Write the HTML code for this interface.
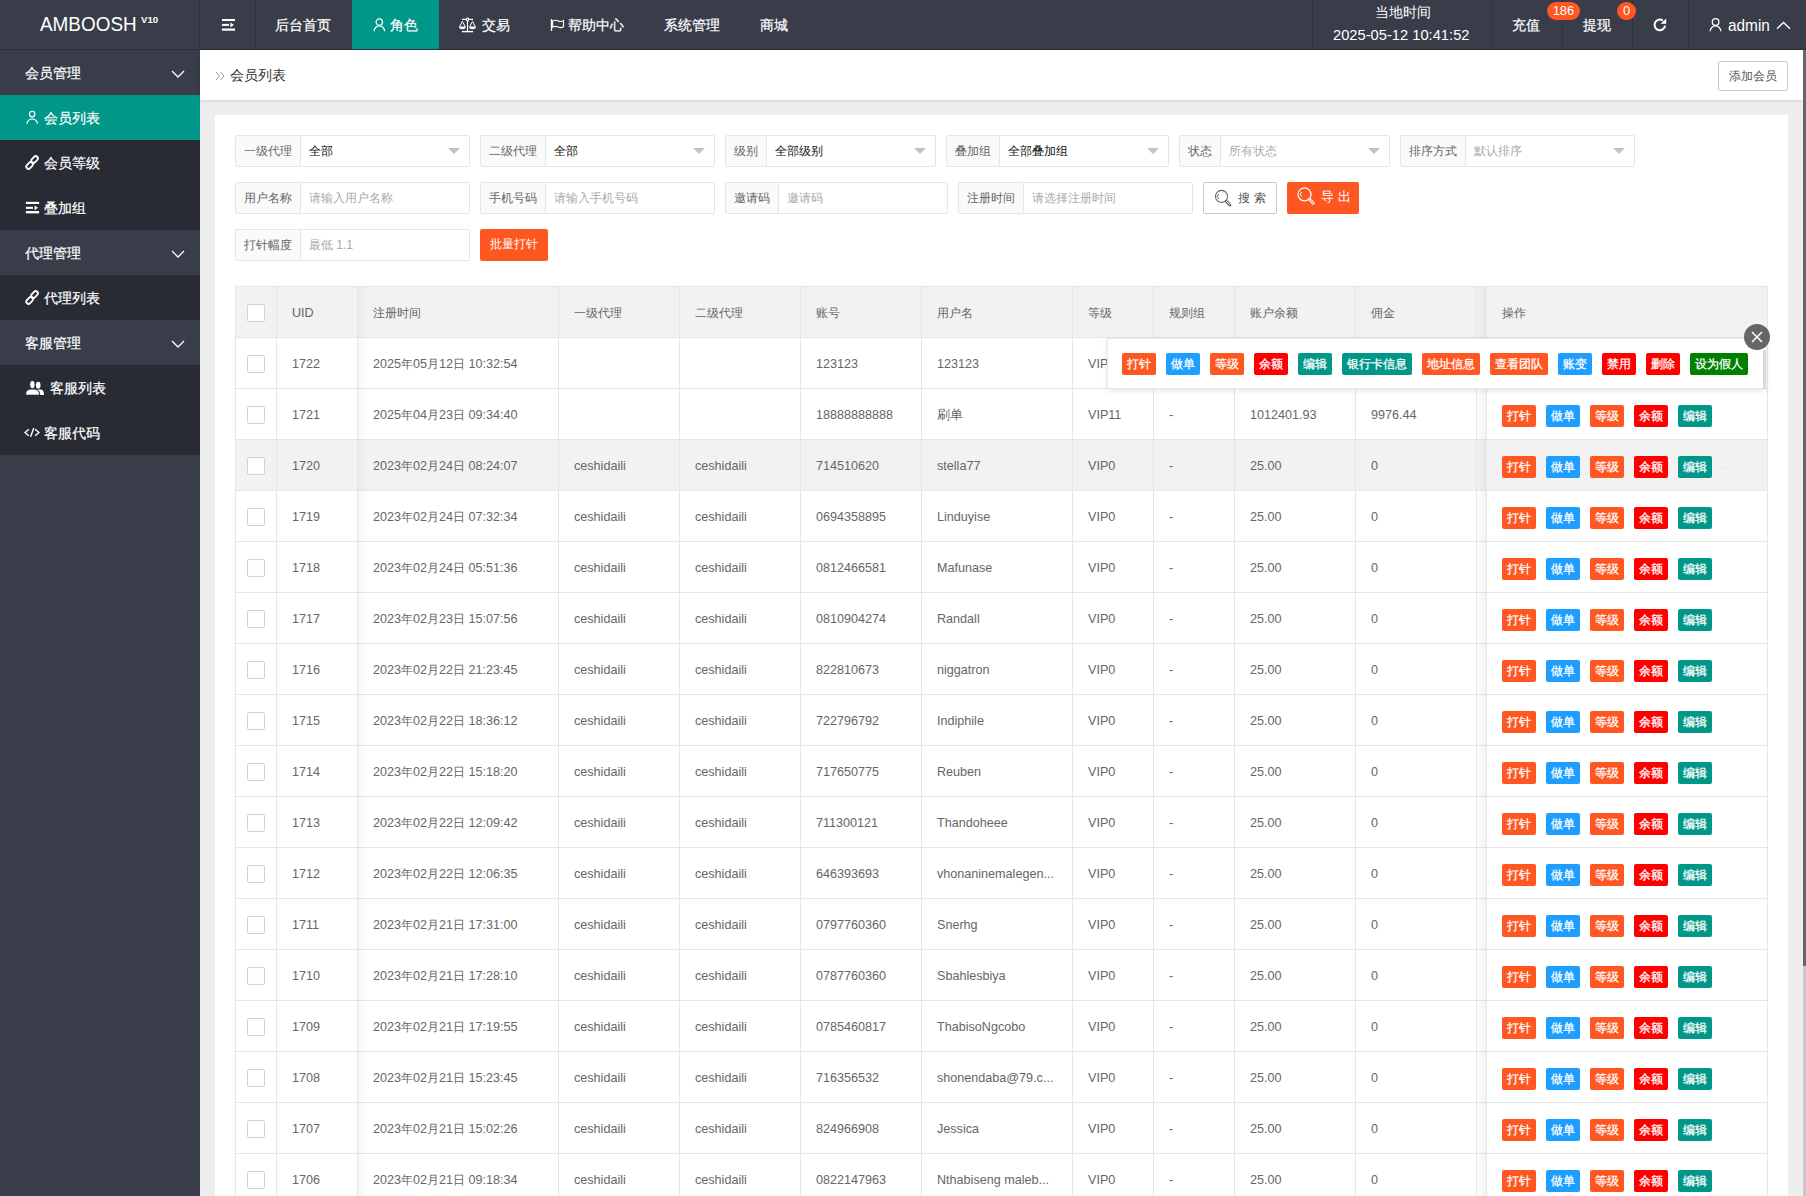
<!DOCTYPE html><html><head><meta charset="utf-8"><title>会员列表</title><style>
*{box-sizing:border-box;margin:0;padding:0}
html,body{width:1806px;height:1196px;overflow:hidden}
body{font-family:"Liberation Sans",sans-serif;background:#eeeeee;position:relative;color:#666}
.abs{position:absolute}
#hdr{left:0;top:0;width:1806px;height:50px;background:#393D49;border-bottom:1px solid #2d3039}
.vl{position:absolute;top:0;height:49px;width:1px;background:#30333d}
.nav{position:absolute;top:0;height:49px;line-height:50px;font-size:14px;color:rgba(255,255,255,.9);white-space:nowrap}
.nav svg{vertical-align:middle}
#side{left:0;top:50px;width:200px;height:1146px;background:#393D49}
.grp{position:absolute;left:0;width:200px;height:45px;line-height:45px;font-size:14px;color:#fff;padding-left:25px}
.chd{position:absolute;left:0;width:200px;background:#282B33;border-radius:0 0 3px 3px}
.itm{position:absolute;left:0;width:200px;height:45px;line-height:45px;font-size:14px;color:rgba(255,255,255,.9);white-space:nowrap}
.lbl{position:absolute;height:32px;line-height:30px;font-size:12px;color:#666;background:#FAFAFA;border:1px solid #e6e6e6;border-radius:2px 0 0 2px;padding-left:8px;white-space:nowrap}
.inp{position:absolute;height:32px;line-height:31px;font-size:12px;color:#111;background:#fff;border:1px solid #e6e6e6;border-left:none;border-radius:0 2px 2px 0;padding-left:8px;white-space:nowrap}
.ph{color:#aaa}
.caret{position:absolute;right:9px;top:12px;width:0;height:0;border-left:6px solid transparent;border-right:6px solid transparent;border-top:6px solid #c2c2c2}
.hl{position:absolute;height:1px;background:#e6e6e6}
.vl2{position:absolute;width:1px;background:#e6e6e6}
.c{position:absolute;font-size:12.6px;color:#666;white-space:nowrap;line-height:20px}
.th{position:absolute;font-size:12px;color:#666;white-space:nowrap;line-height:20px}
.cb{position:absolute;width:18px;height:18px;border:1px solid #d2d2d2;border-radius:2px;background:#fff}
.b{position:absolute;height:22px;line-height:22px;font-size:12px;color:#fff;text-align:center;border-radius:2px;white-space:nowrap;-webkit-text-stroke:0.25px #fff}
</style></head><body>
<div id="hdr" class="abs"></div>
<div class="vl" style="left:199px"></div><div class="vl" style="left:255px"></div>
<div class="abs" style="left:40px;top:12px;font-size:19.4px;color:#fff;line-height:24px;white-space:nowrap;transform:scaleX(.975);transform-origin:0 0">AMBOOSH</div>
<div class="abs" style="left:141px;top:13px;font-size:9.6px;font-weight:bold;color:#fff;line-height:14px;white-space:nowrap">V10</div>
<svg class="abs" style="left:221px;top:18px" width="15" height="14" viewBox="0 0 15 14"><rect x="0.9" y="1" width="13.1" height="2" fill="#fff"/><rect x="0.9" y="5.9" width="7.1" height="2" fill="#fff"/><path d="M9.4 4.4 L13 6.9 L9.4 9.3 Z" fill="#fff"/><rect x="0.9" y="10.5" width="13.1" height="2.2" fill="#fff"/></svg>
<div class="abs" style="left:352px;top:0;width:87px;height:49px;background:#009688"></div>
<div class="abs" style="left:275px;top:15px;font-size:14px;line-height:20px;color:#fff;white-space:nowrap;-webkit-text-stroke:0.2px #fff;">后台首页</div>
<div class="abs" style="left:390px;top:15px;font-size:14px;line-height:20px;color:#fff;white-space:nowrap;-webkit-text-stroke:0.2px #fff;">角色</div>
<div class="abs" style="left:482px;top:15px;font-size:14px;line-height:20px;color:#fff;white-space:nowrap;-webkit-text-stroke:0.2px #fff;">交易</div>
<div class="abs" style="left:568px;top:15px;font-size:14px;line-height:20px;color:#fff;white-space:nowrap;-webkit-text-stroke:0.2px #fff;">帮助中心</div>
<div class="abs" style="left:664px;top:15px;font-size:14px;line-height:20px;color:#fff;white-space:nowrap;-webkit-text-stroke:0.2px #fff;">系统管理</div>
<div class="abs" style="left:760px;top:15px;font-size:14px;line-height:20px;color:#fff;white-space:nowrap;-webkit-text-stroke:0.2px #fff;">商城</div>
<svg class="abs" style="left:373px;top:17px" width="13" height="15" viewBox="0 0 13 15"><circle cx="6.3" cy="5.1" r="3.2" fill="none" stroke="#fff" stroke-width="1.3"/><path d="M1.1 14.2 A5.25 5.25 0 0 1 11.6 14.2" fill="none" stroke="#fff" stroke-width="1.3"/></svg>
<svg class="abs" style="left:456px;top:14px" width="24" height="22" viewBox="0 0 24 22"><path d="M5.9 5.4 H10.2 M12.8 5.4 H17.1" stroke="#fff" stroke-width="1.2"/><circle cx="11.5" cy="5.4" r="1.25" fill="none" stroke="#fff" stroke-width="1.1"/><path d="M11.5 6.6 V17.5" stroke="#fff" stroke-width="1.2"/><path d="M5.9 17.6 H17.1" stroke="#fff" stroke-width="1.4"/><path d="M6.4 7.4 L3.6 12.7 M6.4 7.4 L9.2 12.7 M16.5 7.4 L13.7 12.7 M16.5 7.4 L19.3 12.7" stroke="#fff" stroke-width="1"/><path d="M3 12.5 H9.8 A3.4 2.8 0 0 1 3 12.5 Z M13.1 12.5 H19.9 A3.4 2.8 0 0 1 13.1 12.5 Z" fill="#fff"/></svg>
<svg class="abs" style="left:550px;top:18px" width="15" height="14" viewBox="0 0 15 14"><path d="M1.5 1 V13" stroke="#fff" stroke-width="1.4"/><path d="M2.6 3 C4.5 1.9 6.5 2.2 8.4 3 C10.4 3.8 12 3.6 13.5 2.6 V8.8 C12 9.8 10.4 10 8.4 9.1 C6.5 8.3 4.5 8.1 2.6 9.1 Z" stroke="#fff" stroke-width="1.1" fill="none"/></svg>
<div class="vl" style="left:1312px"></div>
<div class="vl" style="left:1492px"></div>
<div class="vl" style="left:1562px"></div>
<div class="vl" style="left:1632px"></div>
<div class="vl" style="left:1688px"></div>
<div class="abs" style="left:1313px;top:2px;width:179px;text-align:center;color:#fff;font-size:14px;line-height:20px">当地时间</div>
<div class="abs" style="left:1333px;top:25px;color:#fff;font-size:15.4px;line-height:20px;white-space:nowrap;transform:scaleX(.955);transform-origin:0 0">2025-05-12 10:41:52</div>
<div class="abs" style="left:1512px;top:15px;font-size:14px;line-height:20px;color:#fff;white-space:nowrap;-webkit-text-stroke:0.2px #fff;">充值</div>
<div class="abs" style="left:1547px;top:2px;width:33px;height:18px;border-radius:9px;background:#FF5722;color:#fff;font-size:13px;line-height:18px;text-align:center">186</div>
<div class="abs" style="left:1583px;top:15px;font-size:14px;line-height:20px;color:#fff;white-space:nowrap;-webkit-text-stroke:0.2px #fff;">提现</div>
<div class="abs" style="left:1617px;top:2px;width:19px;height:18px;border-radius:9.5px;background:#FF5722;color:#fff;font-size:13px;line-height:18px;text-align:center">0</div>
<svg class="abs" style="left:1652px;top:17px" width="16" height="16" viewBox="0 0 16 16"><path d="M13.1 8.7 A5.3 5.3 0 1 1 10.8 3.5" fill="none" stroke="#fff" stroke-width="2"/><path d="M14.2 1.5 V6.8 H8.6 Z" fill="#fff"/></svg>
<svg class="abs" style="left:1709px;top:17px" width="13" height="15" viewBox="0 0 13 15"><circle cx="6.6" cy="5.0" r="3.3" fill="none" stroke="#fff" stroke-width="1.25"/><path d="M1.2 14.2 A5.3 5.3 0 0 1 11.8 14.2" fill="none" stroke="#fff" stroke-width="1.25"/></svg>
<div class="abs" style="left:1728px;top:15px;color:#fff;font-size:16.2px;line-height:20px;transform:scaleX(.95);transform-origin:0 0">admin</div>
<svg class="abs" style="left:1776px;top:20.5px" width="15" height="9" viewBox="0 0 15 9"><path d="M1 7.8 L7.5 1.5 L14 7.8" fill="none" stroke="#fff" stroke-width="1.4"/></svg>
<div id="side" class="abs"></div>
<div class="chd" style="top:95px;height:135px"></div>
<div class="abs" style="left:0;top:95px;width:200px;height:45px;background:#009688"></div>
<div class="chd" style="top:275px;height:45px"></div>
<div class="chd" style="top:365px;height:90px"></div>
<div class="abs" style="left:25px;top:63px;font-size:14px;line-height:20px;color:#fff;white-space:nowrap;-webkit-text-stroke:0.2px #fff;">会员管理</div>
<svg class="abs" style="left:171px;top:70px" width="14" height="8" viewBox="0 0 14 8"><path d="M1 1 L7 7 L13 1" fill="none" stroke="#fff" stroke-width="1.3"/></svg>
<div class="abs" style="left:25px;top:243px;font-size:14px;line-height:20px;color:#fff;white-space:nowrap;-webkit-text-stroke:0.2px #fff;">代理管理</div>
<svg class="abs" style="left:171px;top:250px" width="14" height="8" viewBox="0 0 14 8"><path d="M1 1 L7 7 L13 1" fill="none" stroke="#fff" stroke-width="1.3"/></svg>
<div class="abs" style="left:25px;top:333px;font-size:14px;line-height:20px;color:#fff;white-space:nowrap;-webkit-text-stroke:0.2px #fff;">客服管理</div>
<svg class="abs" style="left:171px;top:340px" width="14" height="8" viewBox="0 0 14 8"><path d="M1 1 L7 7 L13 1" fill="none" stroke="#fff" stroke-width="1.3"/></svg>
<div class="abs" style="left:44px;top:108px;font-size:14px;line-height:20px;color:#fff;white-space:nowrap;-webkit-text-stroke:0.2px #fff;">会员列表</div>
<div class="abs" style="left:44px;top:153px;font-size:14px;line-height:20px;color:#fff;white-space:nowrap;-webkit-text-stroke:0.2px #fff;">会员等级</div>
<div class="abs" style="left:44px;top:198px;font-size:14px;line-height:20px;color:#fff;white-space:nowrap;-webkit-text-stroke:0.2px #fff;">叠加组</div>
<div class="abs" style="left:44px;top:288px;font-size:14px;line-height:20px;color:#fff;white-space:nowrap;-webkit-text-stroke:0.2px #fff;">代理列表</div>
<div class="abs" style="left:50px;top:378px;font-size:14px;line-height:20px;color:#fff;white-space:nowrap;-webkit-text-stroke:0.2px #fff;">客服列表</div>
<div class="abs" style="left:44px;top:423px;font-size:14px;line-height:20px;color:#fff;white-space:nowrap;-webkit-text-stroke:0.2px #fff;">客服代码</div>
<svg class="abs" style="left:26px;top:110px" width="13" height="15" viewBox="0 0 13 15"><circle cx="6.2" cy="4.1" r="2.75" fill="none" stroke="#fff" stroke-width="1.2"/><path d="M1.0 13.8 A5.2 4.9 0 0 1 11.4 13.8" fill="none" stroke="#fff" stroke-width="1.25"/></svg>
<svg class="abs" style="left:24px;top:154px" width="17" height="17" viewBox="0 0 17 17"><rect x="-3.8" y="-2.2" width="7.6" height="4.4" rx="2.2" fill="none" stroke="#fff" stroke-width="1.8" transform="translate(10.6 5.5) rotate(-47)"/><rect x="-3.8" y="-2.2" width="7.6" height="4.4" rx="2.2" fill="none" stroke="#fff" stroke-width="1.8" transform="translate(5.6 11.5) rotate(-47)"/></svg>
<svg class="abs" style="left:25px;top:201px" width="15" height="14" viewBox="0 0 15 14"><rect x="0.9" y="0.8" width="13.2" height="2.2" fill="#fff"/><rect x="0.9" y="5.8" width="7.1" height="2.1" fill="#fff"/><path d="M9.5 4.4 L13.1 6.8 L9.5 9.2 Z" fill="#fff"/><rect x="0.9" y="10" width="13.2" height="2.4" fill="#fff"/></svg>
<svg class="abs" style="left:24px;top:289px" width="17" height="17" viewBox="0 0 17 17"><rect x="-3.8" y="-2.2" width="7.6" height="4.4" rx="2.2" fill="none" stroke="#fff" stroke-width="1.8" transform="translate(10.6 5.5) rotate(-47)"/><rect x="-3.8" y="-2.2" width="7.6" height="4.4" rx="2.2" fill="none" stroke="#fff" stroke-width="1.8" transform="translate(5.6 11.5) rotate(-47)"/></svg>
<svg class="abs" style="left:25px;top:380px" width="20" height="16" viewBox="0 0 20 16"><path d="M12 9.6 L15.6 9.6 C17.6 9.8 19 11 19 15 H15.2 C15.2 12 14 10.3 12 9.6Z" fill="#fff"/><ellipse cx="13.2" cy="5.2" rx="2.3" ry="3.4" fill="#fff"/><path d="M0.8 15 C0.8 11 2.5 9.6 5.6 9.3 L9.6 9.3 C12.6 9.6 14.4 11 14.4 15 Z" fill="#fff" stroke="#282B33" stroke-width="0.6"/><ellipse cx="7.4" cy="4.6" rx="2.5" ry="3.9" fill="#fff" stroke="#282B33" stroke-width="0.5"/></svg>
<svg class="abs" style="left:24px;top:427px" width="16" height="11" viewBox="0 0 16 11"><path d="M4.9 2.2 L1 5.5 L4.9 8.8 M11.1 2.2 L15 5.5 L11.1 8.8 M9.8 1 L6.6 9.8" fill="none" stroke="#fff" stroke-width="1.4"/></svg>
<div class="abs" style="left:200px;top:50px;width:1603px;height:50px;background:#fff;box-shadow:0 1px 3px rgba(0,0,0,.12)"></div>
<svg class="abs" style="left:215px;top:71px" width="10" height="10" viewBox="0 0 10 10"><path d="M1 1 L4.5 5 L1 9 M5.5 1 L9 5 L5.5 9" fill="none" stroke="#999" stroke-width="1"/></svg>
<div class="abs" style="left:230px;top:65px;font-size:14px;color:#333;line-height:20px">会员列表</div>
<div class="abs" style="left:1718px;top:61px;width:70px;height:30px;border:1px solid #c9c9c9;border-radius:2px;background:#fff;font-size:12px;color:#555;text-align:center;line-height:28px">添加会员</div>
<div class="abs" style="left:1803px;top:50px;width:3px;height:1146px;background:#c8c8c8"></div>
<div class="abs" style="left:1803px;top:50px;width:3px;height:916px;background:#666"></div>
<div class="abs" style="left:215px;top:115px;width:1573px;height:1081px;background:#fff"></div>
<div class="lbl" style="left:235px;top:135px;width:66px">一级代理</div>
<div class="inp" style="left:301px;top:135px;width:169px"><span class="">全部</span><div class="caret"></div></div>
<div class="lbl" style="left:480px;top:135px;width:66px">二级代理</div>
<div class="inp" style="left:546px;top:135px;width:169px"><span class="">全部</span><div class="caret"></div></div>
<div class="lbl" style="left:725px;top:135px;width:42px">级别</div>
<div class="inp" style="left:767px;top:135px;width:169px"><span class="">全部级别</span><div class="caret"></div></div>
<div class="lbl" style="left:946px;top:135px;width:54px">叠加组</div>
<div class="inp" style="left:1000px;top:135px;width:169px"><span class="">全部叠加组</span><div class="caret"></div></div>
<div class="lbl" style="left:1179px;top:135px;width:42px">状态</div>
<div class="inp" style="left:1221px;top:135px;width:169px"><span class="ph">所有状态</span><div class="caret"></div></div>
<div class="lbl" style="left:1400px;top:135px;width:66px">排序方式</div>
<div class="inp" style="left:1466px;top:135px;width:169px"><span class="ph">默认排序</span><div class="caret"></div></div>
<div class="lbl" style="left:235px;top:182px;width:66px">用户名称</div>
<div class="inp" style="left:301px;top:182px;width:169px"><span class="ph">请输入用户名称</span></div>
<div class="lbl" style="left:480px;top:182px;width:66px">手机号码</div>
<div class="inp" style="left:546px;top:182px;width:169px"><span class="ph">请输入手机号码</span></div>
<div class="lbl" style="left:725px;top:182px;width:54px">邀请码</div>
<div class="inp" style="left:779px;top:182px;width:169px"><span class="ph">邀请码</span></div>
<div class="lbl" style="left:958px;top:182px;width:66px">注册时间</div>
<div class="inp" style="left:1024px;top:182px;width:169px"><span class="ph">请选择注册时间</span></div>
<div class="lbl" style="left:235px;top:229px;width:66px">打针幅度</div>
<div class="inp" style="left:301px;top:229px;width:169px"><span class="ph">最低 1.1</span></div>
<div class="abs" style="left:1203px;top:182px;width:74px;height:32px;border:1px solid #c9c9c9;border-radius:2px;background:#fff"></div>
<svg class="abs" style="left:1213px;top:188px" width="20" height="20" viewBox="0 0 20 20"><circle cx="8.5" cy="8.4" r="6" fill="none" stroke="#666" stroke-width="1.1"/><path d="M5.6 6 A3.3 3.3 0 0 0 5.6 10.8" fill="none" stroke="#666" stroke-width="1"/><path d="M13.30 13.20 L16.9 16.9" stroke="#666" stroke-width="2.9" stroke-linecap="round"/><path d="M13.50 13.40 L16.7 16.7" stroke="#fff" stroke-width="0.9" stroke-linecap="round"/></svg>
<div class="abs" style="left:1238px;top:188px;font-size:12px;line-height:20px;color:#555;letter-spacing:3.5px;white-space:nowrap">搜索</div>
<div class="abs" style="left:1287px;top:182px;width:72px;height:32px;border-radius:2px;background:#FF5722"></div>
<svg class="abs" style="left:1296px;top:186px" width="20" height="20" viewBox="0 0 20 20"><circle cx="8.5" cy="8.4" r="6.5" fill="none" stroke="#fff" stroke-width="1.2"/><path d="M5.6 6 A3.3 3.3 0 0 0 5.6 10.8" fill="none" stroke="#fff" stroke-width="1"/><path d="M13.70 13.60 L17.2 17.2" stroke="#fff" stroke-width="2.9" stroke-linecap="round"/><path d="M13.90 13.80 L17.0 17.0" stroke="#FF5722" stroke-width="0.9" stroke-linecap="round"/></svg>
<div class="abs" style="left:1321px;top:187px;font-size:13px;line-height:20px;color:#fff;letter-spacing:3.6px;white-space:nowrap">导出</div>
<div class="abs" style="left:480px;top:229px;width:68px;height:32px;border-radius:2px;background:#FF5722;font-size:12px;color:#fff;line-height:30px;text-align:center">批量打针</div>
<div class="abs" style="left:235px;top:286px;width:1533px;height:52px;background:#f2f2f2"></div>
<div class="abs" style="left:235px;top:439px;width:1533px;height:51px;background:#f2f2f2"></div>
<div class="hl" style="left:235px;top:286px;width:1533px"></div>
<div class="hl" style="left:235px;top:337px;width:1533px"></div>
<div class="hl" style="left:235px;top:388px;width:1533px"></div>
<div class="hl" style="left:235px;top:439px;width:1533px"></div>
<div class="hl" style="left:235px;top:490px;width:1533px"></div>
<div class="hl" style="left:235px;top:541px;width:1533px"></div>
<div class="hl" style="left:235px;top:592px;width:1533px"></div>
<div class="hl" style="left:235px;top:643px;width:1533px"></div>
<div class="hl" style="left:235px;top:694px;width:1533px"></div>
<div class="hl" style="left:235px;top:745px;width:1533px"></div>
<div class="hl" style="left:235px;top:796px;width:1533px"></div>
<div class="hl" style="left:235px;top:847px;width:1533px"></div>
<div class="hl" style="left:235px;top:898px;width:1533px"></div>
<div class="hl" style="left:235px;top:949px;width:1533px"></div>
<div class="hl" style="left:235px;top:1000px;width:1533px"></div>
<div class="hl" style="left:235px;top:1051px;width:1533px"></div>
<div class="hl" style="left:235px;top:1102px;width:1533px"></div>
<div class="hl" style="left:235px;top:1153px;width:1533px"></div>
<div class="vl2" style="left:235px;top:286px;height:910px"></div>
<div class="vl2" style="left:276px;top:286px;height:910px"></div>
<div class="vl2" style="left:357px;top:286px;height:910px"></div>
<div class="vl2" style="left:558px;top:286px;height:910px"></div>
<div class="vl2" style="left:679px;top:286px;height:910px"></div>
<div class="vl2" style="left:800px;top:286px;height:910px"></div>
<div class="vl2" style="left:921px;top:286px;height:910px"></div>
<div class="vl2" style="left:1072px;top:286px;height:910px"></div>
<div class="vl2" style="left:1153px;top:286px;height:910px"></div>
<div class="vl2" style="left:1234px;top:286px;height:910px"></div>
<div class="vl2" style="left:1355px;top:286px;height:910px"></div>
<div class="vl2" style="left:1476px;top:286px;height:910px"></div>
<div class="vl2" style="left:1486px;top:286px;height:910px"></div>
<div class="vl2" style="left:1767px;top:286px;height:910px"></div>
<div class="abs" style="left:358px;top:287px;width:9px;height:910px;background:linear-gradient(to right,rgba(0,0,0,.04),rgba(0,0,0,0))"></div>
<div class="abs" style="left:1477px;top:287px;width:9px;height:910px;background:linear-gradient(to left,rgba(0,0,0,.05),rgba(0,0,0,0))"></div>
<div class="cb" style="left:247px;top:304px"></div>
<div class="c" style="left:292px;top:303px">UID</div>
<div class="th" style="left:373px;top:303px">注册时间</div>
<div class="th" style="left:574px;top:303px">一级代理</div>
<div class="th" style="left:695px;top:303px">二级代理</div>
<div class="th" style="left:816px;top:303px">账号</div>
<div class="th" style="left:937px;top:303px">用户名</div>
<div class="th" style="left:1088px;top:303px">等级</div>
<div class="th" style="left:1169px;top:303px">规则组</div>
<div class="th" style="left:1250px;top:303px">账户余额</div>
<div class="th" style="left:1371px;top:303px">佣金</div>
<div class="th" style="left:1502px;top:303px">操作</div>
<div class="cb" style="left:247px;top:355px"></div>
<div class="c" style="left:292px;top:354px">1722</div>
<div class="c" style="left:373px;top:354px">2025<span style="font-size:12px">年</span>05<span style="font-size:12px">月</span>12<span style="font-size:12px">日</span> 10:32:54</div>
<div class="c" style="left:816px;top:354px">123123</div>
<div class="c" style="left:937px;top:354px">123123</div>
<div class="c" style="left:1088px;top:354px">VIP</div>
<div class="cb" style="left:247px;top:406px"></div>
<div class="c" style="left:292px;top:405px">1721</div>
<div class="c" style="left:373px;top:405px">2025<span style="font-size:12px">年</span>04<span style="font-size:12px">月</span>23<span style="font-size:12px">日</span> 09:34:40</div>
<div class="c" style="left:816px;top:405px">18888888888</div>
<div class="c" style="left:937px;top:405px">刷单</div>
<div class="c" style="left:1088px;top:405px">VIP11</div>
<div class="c" style="left:1169px;top:405px">-</div>
<div class="c" style="left:1250px;top:405px">1012401.93</div>
<div class="c" style="left:1371px;top:405px">9976.44</div>
<div class="b" style="left:1502px;top:405px;width:34px;background:#FF5722">打针</div>
<div class="b" style="left:1546px;top:405px;width:34px;background:#1E9FFF">做单</div>
<div class="b" style="left:1590px;top:405px;width:34px;background:#FF5722">等级</div>
<div class="b" style="left:1634px;top:405px;width:34px;background:#FF0000">余额</div>
<div class="b" style="left:1678px;top:405px;width:34px;background:#009688">编辑</div>
<div class="cb" style="left:247px;top:457px"></div>
<div class="c" style="left:292px;top:456px">1720</div>
<div class="c" style="left:373px;top:456px">2023<span style="font-size:12px">年</span>02<span style="font-size:12px">月</span>24<span style="font-size:12px">日</span> 08:24:07</div>
<div class="c" style="left:574px;top:456px">ceshidaili</div>
<div class="c" style="left:695px;top:456px">ceshidaili</div>
<div class="c" style="left:816px;top:456px">714510620</div>
<div class="c" style="left:937px;top:456px">stella77</div>
<div class="c" style="left:1088px;top:456px">VIP0</div>
<div class="c" style="left:1169px;top:456px">-</div>
<div class="c" style="left:1250px;top:456px">25.00</div>
<div class="c" style="left:1371px;top:456px">0</div>
<div class="b" style="left:1502px;top:456px;width:34px;background:#FF5722">打针</div>
<div class="b" style="left:1546px;top:456px;width:34px;background:#1E9FFF">做单</div>
<div class="b" style="left:1590px;top:456px;width:34px;background:#FF5722">等级</div>
<div class="b" style="left:1634px;top:456px;width:34px;background:#FF0000">余额</div>
<div class="b" style="left:1678px;top:456px;width:34px;background:#009688">编辑</div>
<div class="cb" style="left:247px;top:508px"></div>
<div class="c" style="left:292px;top:507px">1719</div>
<div class="c" style="left:373px;top:507px">2023<span style="font-size:12px">年</span>02<span style="font-size:12px">月</span>24<span style="font-size:12px">日</span> 07:32:34</div>
<div class="c" style="left:574px;top:507px">ceshidaili</div>
<div class="c" style="left:695px;top:507px">ceshidaili</div>
<div class="c" style="left:816px;top:507px">0694358895</div>
<div class="c" style="left:937px;top:507px">Linduyise</div>
<div class="c" style="left:1088px;top:507px">VIP0</div>
<div class="c" style="left:1169px;top:507px">-</div>
<div class="c" style="left:1250px;top:507px">25.00</div>
<div class="c" style="left:1371px;top:507px">0</div>
<div class="b" style="left:1502px;top:507px;width:34px;background:#FF5722">打针</div>
<div class="b" style="left:1546px;top:507px;width:34px;background:#1E9FFF">做单</div>
<div class="b" style="left:1590px;top:507px;width:34px;background:#FF5722">等级</div>
<div class="b" style="left:1634px;top:507px;width:34px;background:#FF0000">余额</div>
<div class="b" style="left:1678px;top:507px;width:34px;background:#009688">编辑</div>
<div class="cb" style="left:247px;top:559px"></div>
<div class="c" style="left:292px;top:558px">1718</div>
<div class="c" style="left:373px;top:558px">2023<span style="font-size:12px">年</span>02<span style="font-size:12px">月</span>24<span style="font-size:12px">日</span> 05:51:36</div>
<div class="c" style="left:574px;top:558px">ceshidaili</div>
<div class="c" style="left:695px;top:558px">ceshidaili</div>
<div class="c" style="left:816px;top:558px">0812466581</div>
<div class="c" style="left:937px;top:558px">Mafunase</div>
<div class="c" style="left:1088px;top:558px">VIP0</div>
<div class="c" style="left:1169px;top:558px">-</div>
<div class="c" style="left:1250px;top:558px">25.00</div>
<div class="c" style="left:1371px;top:558px">0</div>
<div class="b" style="left:1502px;top:558px;width:34px;background:#FF5722">打针</div>
<div class="b" style="left:1546px;top:558px;width:34px;background:#1E9FFF">做单</div>
<div class="b" style="left:1590px;top:558px;width:34px;background:#FF5722">等级</div>
<div class="b" style="left:1634px;top:558px;width:34px;background:#FF0000">余额</div>
<div class="b" style="left:1678px;top:558px;width:34px;background:#009688">编辑</div>
<div class="cb" style="left:247px;top:610px"></div>
<div class="c" style="left:292px;top:609px">1717</div>
<div class="c" style="left:373px;top:609px">2023<span style="font-size:12px">年</span>02<span style="font-size:12px">月</span>23<span style="font-size:12px">日</span> 15:07:56</div>
<div class="c" style="left:574px;top:609px">ceshidaili</div>
<div class="c" style="left:695px;top:609px">ceshidaili</div>
<div class="c" style="left:816px;top:609px">0810904274</div>
<div class="c" style="left:937px;top:609px">Randall</div>
<div class="c" style="left:1088px;top:609px">VIP0</div>
<div class="c" style="left:1169px;top:609px">-</div>
<div class="c" style="left:1250px;top:609px">25.00</div>
<div class="c" style="left:1371px;top:609px">0</div>
<div class="b" style="left:1502px;top:609px;width:34px;background:#FF5722">打针</div>
<div class="b" style="left:1546px;top:609px;width:34px;background:#1E9FFF">做单</div>
<div class="b" style="left:1590px;top:609px;width:34px;background:#FF5722">等级</div>
<div class="b" style="left:1634px;top:609px;width:34px;background:#FF0000">余额</div>
<div class="b" style="left:1678px;top:609px;width:34px;background:#009688">编辑</div>
<div class="cb" style="left:247px;top:661px"></div>
<div class="c" style="left:292px;top:660px">1716</div>
<div class="c" style="left:373px;top:660px">2023<span style="font-size:12px">年</span>02<span style="font-size:12px">月</span>22<span style="font-size:12px">日</span> 21:23:45</div>
<div class="c" style="left:574px;top:660px">ceshidaili</div>
<div class="c" style="left:695px;top:660px">ceshidaili</div>
<div class="c" style="left:816px;top:660px">822810673</div>
<div class="c" style="left:937px;top:660px">niggatron</div>
<div class="c" style="left:1088px;top:660px">VIP0</div>
<div class="c" style="left:1169px;top:660px">-</div>
<div class="c" style="left:1250px;top:660px">25.00</div>
<div class="c" style="left:1371px;top:660px">0</div>
<div class="b" style="left:1502px;top:660px;width:34px;background:#FF5722">打针</div>
<div class="b" style="left:1546px;top:660px;width:34px;background:#1E9FFF">做单</div>
<div class="b" style="left:1590px;top:660px;width:34px;background:#FF5722">等级</div>
<div class="b" style="left:1634px;top:660px;width:34px;background:#FF0000">余额</div>
<div class="b" style="left:1678px;top:660px;width:34px;background:#009688">编辑</div>
<div class="cb" style="left:247px;top:712px"></div>
<div class="c" style="left:292px;top:711px">1715</div>
<div class="c" style="left:373px;top:711px">2023<span style="font-size:12px">年</span>02<span style="font-size:12px">月</span>22<span style="font-size:12px">日</span> 18:36:12</div>
<div class="c" style="left:574px;top:711px">ceshidaili</div>
<div class="c" style="left:695px;top:711px">ceshidaili</div>
<div class="c" style="left:816px;top:711px">722796792</div>
<div class="c" style="left:937px;top:711px">Indiphile</div>
<div class="c" style="left:1088px;top:711px">VIP0</div>
<div class="c" style="left:1169px;top:711px">-</div>
<div class="c" style="left:1250px;top:711px">25.00</div>
<div class="c" style="left:1371px;top:711px">0</div>
<div class="b" style="left:1502px;top:711px;width:34px;background:#FF5722">打针</div>
<div class="b" style="left:1546px;top:711px;width:34px;background:#1E9FFF">做单</div>
<div class="b" style="left:1590px;top:711px;width:34px;background:#FF5722">等级</div>
<div class="b" style="left:1634px;top:711px;width:34px;background:#FF0000">余额</div>
<div class="b" style="left:1678px;top:711px;width:34px;background:#009688">编辑</div>
<div class="cb" style="left:247px;top:763px"></div>
<div class="c" style="left:292px;top:762px">1714</div>
<div class="c" style="left:373px;top:762px">2023<span style="font-size:12px">年</span>02<span style="font-size:12px">月</span>22<span style="font-size:12px">日</span> 15:18:20</div>
<div class="c" style="left:574px;top:762px">ceshidaili</div>
<div class="c" style="left:695px;top:762px">ceshidaili</div>
<div class="c" style="left:816px;top:762px">717650775</div>
<div class="c" style="left:937px;top:762px">Reuben</div>
<div class="c" style="left:1088px;top:762px">VIP0</div>
<div class="c" style="left:1169px;top:762px">-</div>
<div class="c" style="left:1250px;top:762px">25.00</div>
<div class="c" style="left:1371px;top:762px">0</div>
<div class="b" style="left:1502px;top:762px;width:34px;background:#FF5722">打针</div>
<div class="b" style="left:1546px;top:762px;width:34px;background:#1E9FFF">做单</div>
<div class="b" style="left:1590px;top:762px;width:34px;background:#FF5722">等级</div>
<div class="b" style="left:1634px;top:762px;width:34px;background:#FF0000">余额</div>
<div class="b" style="left:1678px;top:762px;width:34px;background:#009688">编辑</div>
<div class="cb" style="left:247px;top:814px"></div>
<div class="c" style="left:292px;top:813px">1713</div>
<div class="c" style="left:373px;top:813px">2023<span style="font-size:12px">年</span>02<span style="font-size:12px">月</span>22<span style="font-size:12px">日</span> 12:09:42</div>
<div class="c" style="left:574px;top:813px">ceshidaili</div>
<div class="c" style="left:695px;top:813px">ceshidaili</div>
<div class="c" style="left:816px;top:813px">711300121</div>
<div class="c" style="left:937px;top:813px">Thandoheee</div>
<div class="c" style="left:1088px;top:813px">VIP0</div>
<div class="c" style="left:1169px;top:813px">-</div>
<div class="c" style="left:1250px;top:813px">25.00</div>
<div class="c" style="left:1371px;top:813px">0</div>
<div class="b" style="left:1502px;top:813px;width:34px;background:#FF5722">打针</div>
<div class="b" style="left:1546px;top:813px;width:34px;background:#1E9FFF">做单</div>
<div class="b" style="left:1590px;top:813px;width:34px;background:#FF5722">等级</div>
<div class="b" style="left:1634px;top:813px;width:34px;background:#FF0000">余额</div>
<div class="b" style="left:1678px;top:813px;width:34px;background:#009688">编辑</div>
<div class="cb" style="left:247px;top:865px"></div>
<div class="c" style="left:292px;top:864px">1712</div>
<div class="c" style="left:373px;top:864px">2023<span style="font-size:12px">年</span>02<span style="font-size:12px">月</span>22<span style="font-size:12px">日</span> 12:06:35</div>
<div class="c" style="left:574px;top:864px">ceshidaili</div>
<div class="c" style="left:695px;top:864px">ceshidaili</div>
<div class="c" style="left:816px;top:864px">646393693</div>
<div class="c" style="left:937px;top:864px">vhonaninemalegen...</div>
<div class="c" style="left:1088px;top:864px">VIP0</div>
<div class="c" style="left:1169px;top:864px">-</div>
<div class="c" style="left:1250px;top:864px">25.00</div>
<div class="c" style="left:1371px;top:864px">0</div>
<div class="b" style="left:1502px;top:864px;width:34px;background:#FF5722">打针</div>
<div class="b" style="left:1546px;top:864px;width:34px;background:#1E9FFF">做单</div>
<div class="b" style="left:1590px;top:864px;width:34px;background:#FF5722">等级</div>
<div class="b" style="left:1634px;top:864px;width:34px;background:#FF0000">余额</div>
<div class="b" style="left:1678px;top:864px;width:34px;background:#009688">编辑</div>
<div class="cb" style="left:247px;top:916px"></div>
<div class="c" style="left:292px;top:915px">1711</div>
<div class="c" style="left:373px;top:915px">2023<span style="font-size:12px">年</span>02<span style="font-size:12px">月</span>21<span style="font-size:12px">日</span> 17:31:00</div>
<div class="c" style="left:574px;top:915px">ceshidaili</div>
<div class="c" style="left:695px;top:915px">ceshidaili</div>
<div class="c" style="left:816px;top:915px">0797760360</div>
<div class="c" style="left:937px;top:915px">Snerhg</div>
<div class="c" style="left:1088px;top:915px">VIP0</div>
<div class="c" style="left:1169px;top:915px">-</div>
<div class="c" style="left:1250px;top:915px">25.00</div>
<div class="c" style="left:1371px;top:915px">0</div>
<div class="b" style="left:1502px;top:915px;width:34px;background:#FF5722">打针</div>
<div class="b" style="left:1546px;top:915px;width:34px;background:#1E9FFF">做单</div>
<div class="b" style="left:1590px;top:915px;width:34px;background:#FF5722">等级</div>
<div class="b" style="left:1634px;top:915px;width:34px;background:#FF0000">余额</div>
<div class="b" style="left:1678px;top:915px;width:34px;background:#009688">编辑</div>
<div class="cb" style="left:247px;top:967px"></div>
<div class="c" style="left:292px;top:966px">1710</div>
<div class="c" style="left:373px;top:966px">2023<span style="font-size:12px">年</span>02<span style="font-size:12px">月</span>21<span style="font-size:12px">日</span> 17:28:10</div>
<div class="c" style="left:574px;top:966px">ceshidaili</div>
<div class="c" style="left:695px;top:966px">ceshidaili</div>
<div class="c" style="left:816px;top:966px">0787760360</div>
<div class="c" style="left:937px;top:966px">Sbahlesbiya</div>
<div class="c" style="left:1088px;top:966px">VIP0</div>
<div class="c" style="left:1169px;top:966px">-</div>
<div class="c" style="left:1250px;top:966px">25.00</div>
<div class="c" style="left:1371px;top:966px">0</div>
<div class="b" style="left:1502px;top:966px;width:34px;background:#FF5722">打针</div>
<div class="b" style="left:1546px;top:966px;width:34px;background:#1E9FFF">做单</div>
<div class="b" style="left:1590px;top:966px;width:34px;background:#FF5722">等级</div>
<div class="b" style="left:1634px;top:966px;width:34px;background:#FF0000">余额</div>
<div class="b" style="left:1678px;top:966px;width:34px;background:#009688">编辑</div>
<div class="cb" style="left:247px;top:1018px"></div>
<div class="c" style="left:292px;top:1017px">1709</div>
<div class="c" style="left:373px;top:1017px">2023<span style="font-size:12px">年</span>02<span style="font-size:12px">月</span>21<span style="font-size:12px">日</span> 17:19:55</div>
<div class="c" style="left:574px;top:1017px">ceshidaili</div>
<div class="c" style="left:695px;top:1017px">ceshidaili</div>
<div class="c" style="left:816px;top:1017px">0785460817</div>
<div class="c" style="left:937px;top:1017px">ThabisoNgcobo</div>
<div class="c" style="left:1088px;top:1017px">VIP0</div>
<div class="c" style="left:1169px;top:1017px">-</div>
<div class="c" style="left:1250px;top:1017px">25.00</div>
<div class="c" style="left:1371px;top:1017px">0</div>
<div class="b" style="left:1502px;top:1017px;width:34px;background:#FF5722">打针</div>
<div class="b" style="left:1546px;top:1017px;width:34px;background:#1E9FFF">做单</div>
<div class="b" style="left:1590px;top:1017px;width:34px;background:#FF5722">等级</div>
<div class="b" style="left:1634px;top:1017px;width:34px;background:#FF0000">余额</div>
<div class="b" style="left:1678px;top:1017px;width:34px;background:#009688">编辑</div>
<div class="cb" style="left:247px;top:1069px"></div>
<div class="c" style="left:292px;top:1068px">1708</div>
<div class="c" style="left:373px;top:1068px">2023<span style="font-size:12px">年</span>02<span style="font-size:12px">月</span>21<span style="font-size:12px">日</span> 15:23:45</div>
<div class="c" style="left:574px;top:1068px">ceshidaili</div>
<div class="c" style="left:695px;top:1068px">ceshidaili</div>
<div class="c" style="left:816px;top:1068px">716356532</div>
<div class="c" style="left:937px;top:1068px">shonendaba@79.c...</div>
<div class="c" style="left:1088px;top:1068px">VIP0</div>
<div class="c" style="left:1169px;top:1068px">-</div>
<div class="c" style="left:1250px;top:1068px">25.00</div>
<div class="c" style="left:1371px;top:1068px">0</div>
<div class="b" style="left:1502px;top:1068px;width:34px;background:#FF5722">打针</div>
<div class="b" style="left:1546px;top:1068px;width:34px;background:#1E9FFF">做单</div>
<div class="b" style="left:1590px;top:1068px;width:34px;background:#FF5722">等级</div>
<div class="b" style="left:1634px;top:1068px;width:34px;background:#FF0000">余额</div>
<div class="b" style="left:1678px;top:1068px;width:34px;background:#009688">编辑</div>
<div class="cb" style="left:247px;top:1120px"></div>
<div class="c" style="left:292px;top:1119px">1707</div>
<div class="c" style="left:373px;top:1119px">2023<span style="font-size:12px">年</span>02<span style="font-size:12px">月</span>21<span style="font-size:12px">日</span> 15:02:26</div>
<div class="c" style="left:574px;top:1119px">ceshidaili</div>
<div class="c" style="left:695px;top:1119px">ceshidaili</div>
<div class="c" style="left:816px;top:1119px">824966908</div>
<div class="c" style="left:937px;top:1119px">Jessica</div>
<div class="c" style="left:1088px;top:1119px">VIP0</div>
<div class="c" style="left:1169px;top:1119px">-</div>
<div class="c" style="left:1250px;top:1119px">25.00</div>
<div class="c" style="left:1371px;top:1119px">0</div>
<div class="b" style="left:1502px;top:1119px;width:34px;background:#FF5722">打针</div>
<div class="b" style="left:1546px;top:1119px;width:34px;background:#1E9FFF">做单</div>
<div class="b" style="left:1590px;top:1119px;width:34px;background:#FF5722">等级</div>
<div class="b" style="left:1634px;top:1119px;width:34px;background:#FF0000">余额</div>
<div class="b" style="left:1678px;top:1119px;width:34px;background:#009688">编辑</div>
<div class="cb" style="left:247px;top:1171px"></div>
<div class="c" style="left:292px;top:1170px">1706</div>
<div class="c" style="left:373px;top:1170px">2023<span style="font-size:12px">年</span>02<span style="font-size:12px">月</span>21<span style="font-size:12px">日</span> 09:18:34</div>
<div class="c" style="left:574px;top:1170px">ceshidaili</div>
<div class="c" style="left:695px;top:1170px">ceshidaili</div>
<div class="c" style="left:816px;top:1170px">0822147963</div>
<div class="c" style="left:937px;top:1170px">Nthabiseng maleb...</div>
<div class="c" style="left:1088px;top:1170px">VIP0</div>
<div class="c" style="left:1169px;top:1170px">-</div>
<div class="c" style="left:1250px;top:1170px">25.00</div>
<div class="c" style="left:1371px;top:1170px">0</div>
<div class="b" style="left:1502px;top:1170px;width:34px;background:#FF5722">打针</div>
<div class="b" style="left:1546px;top:1170px;width:34px;background:#1E9FFF">做单</div>
<div class="b" style="left:1590px;top:1170px;width:34px;background:#FF5722">等级</div>
<div class="b" style="left:1634px;top:1170px;width:34px;background:#FF0000">余额</div>
<div class="b" style="left:1678px;top:1170px;width:34px;background:#009688">编辑</div>
<div class="abs" style="left:1723px;top:456px;font-size:10px;line-height:20px;color:#e0e0e0">...</div>
<div class="abs" style="left:1107px;top:338px;width:659px;height:51px;background:#fff;border:1px solid #e8e8e8;border-right:none;box-shadow:0 2px 6px rgba(0,0,0,.1)"></div>
<div class="abs" style="left:1763px;top:350px;width:3px;height:39px;background:#d9d9d9"></div>
<div class="b" style="left:1122px;top:353px;width:34px;background:#FF5722">打针</div>
<div class="b" style="left:1166px;top:353px;width:34px;background:#1E9FFF">做单</div>
<div class="b" style="left:1210px;top:353px;width:34px;background:#FF5722">等级</div>
<div class="b" style="left:1254px;top:353px;width:34px;background:#FF0000">余额</div>
<div class="b" style="left:1298px;top:353px;width:34px;background:#009688">编辑</div>
<div class="b" style="left:1342px;top:353px;width:70px;background:#009688">银行卡信息</div>
<div class="b" style="left:1422px;top:353px;width:58px;background:#FF5722">地址信息</div>
<div class="b" style="left:1490px;top:353px;width:58px;background:#FF5722">查看团队</div>
<div class="b" style="left:1558px;top:353px;width:34px;background:#1E9FFF">账变</div>
<div class="b" style="left:1602px;top:353px;width:34px;background:#FF0000">禁用</div>
<div class="b" style="left:1646px;top:353px;width:34px;background:#FF0000">删除</div>
<div class="b" style="left:1690px;top:353px;width:58px;background:#008000">设为假人</div>
<div class="abs" style="left:1744px;top:324px;width:26px;height:26px;border-radius:13px;background:#666"></div>
<svg class="abs" style="left:1751px;top:331px" width="12" height="12" viewBox="0 0 12 12"><path d="M1 1 L11 11 M11 1 L1 11" stroke="#fff" stroke-width="1.5"/></svg>
</body></html>
